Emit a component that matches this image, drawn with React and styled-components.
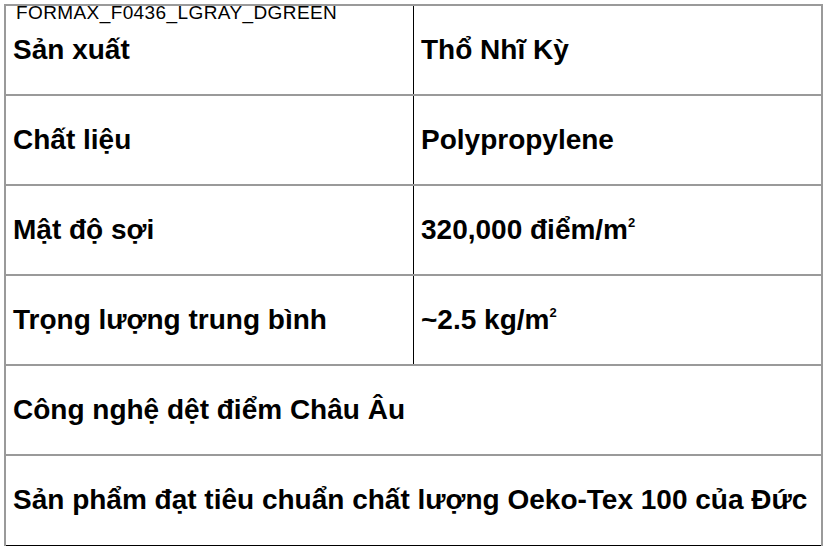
import React from 'react';
import styled, { createGlobalStyle } from 'styled-components';

const GlobalStyle = createGlobalStyle`
  body {
    margin: 0;
    background: #fff;
    font-family: "Liberation Sans", Arial, sans-serif;
    color: #000;
  }
`;

const Page = styled.div`
  position: relative;
  padding: 4px 4px 0 4px;
`;

const Caption = styled.div`
  position: absolute;
  top: 3px;
  left: 16px;
  font-size: 19px;
  letter-spacing: 0.4px;
  line-height: 20px;
  color: #000;
`;

const Table = styled.table`
  width: 819px;
  border-collapse: collapse;
  border-top: 2px solid #9a9a9a;
  border-left: 2px solid #9a9a9a;
  border-right: 2px solid #9a9a9a;
  border-bottom: 1px solid #000;
`;

const Row = styled.tr`
  height: 90px;
  border-bottom: 2px solid #9a9a9a;

  &:last-child {
    border-bottom: 1px solid #000;
  }
`;

const Cell = styled.td`
  padding: 0 8px 0 7px;
  font-size: 28px;
  font-weight: bold;
  white-space: nowrap;
  vertical-align: middle;
  width: ${props => (props.$first ? '392px' : 'auto')};
  border-right: ${props => (props.$first ? '1px solid #000' : 'none')};
`;

const Sup = styled.sup`
  font-size: 13px;
  vertical-align: 12px;
  line-height: 0;
`;

const specs = [
  ['Sản xuất', 'Thổ Nhĩ Kỳ'],
  ['Chất liệu', 'Polypropylene'],
  ['Mật độ sợi', <>320,000 điểm/m<Sup>2</Sup></>],
  ['Trọng lượng trung bình', <>~2.5 kg/m<Sup>2</Sup></>],
];

const notes = [
  'Công nghệ dệt điểm Châu Âu',
  'Sản phẩm đạt tiêu chuẩn chất lượng Oeko-Tex 100 của Đức',
];

export default function App() {
  return (
    <>
      <GlobalStyle />
      <Page>
        <Caption>FORMAX_F0436_LGRAY_DGREEN</Caption>
        <Table>
          <tbody>
            {specs.map(([label, value], i) => (
              <Row key={i}>
                <Cell $first>{label}</Cell>
                <Cell>{value}</Cell>
              </Row>
            ))}
            {notes.map((text, i) => (
              <Row key={'n' + i}>
                <Cell colSpan={2}>{text}</Cell>
              </Row>
            ))}
          </tbody>
        </Table>
      </Page>
    </>
  );
}
